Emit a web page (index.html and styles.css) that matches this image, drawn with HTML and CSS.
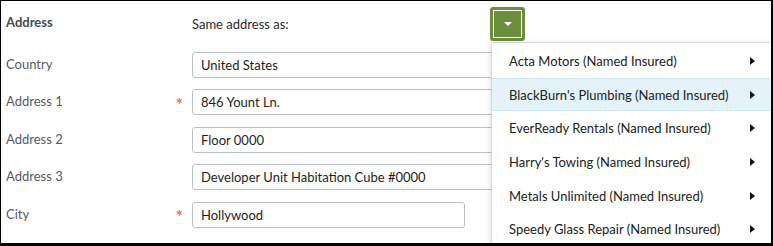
FILE: index.html
```html
<!DOCTYPE html>
<html>
<head>
<meta charset="utf-8">
<link rel="stylesheet" href="styles.css">
</head>
<body>
<div class="frame">
  <div class="form">
    <div class="section-title">Address</div>
    <div class="header-right">
      <span class="same-label">Same address as:</span>
      <button class="menu-btn" type="button"><span class="btn-inner"><span class="tri-down"></span></span></button>
    </div>

    <div class="label">Country</div>
    <div class="req"></div>
    <div class="field"><div class="input wide">United States</div></div>

    <div class="label">Address 1</div>
    <div class="req">*</div>
    <div class="field"><div class="input wide">846 Yount Ln.</div></div>

    <div class="label">Address 2</div>
    <div class="req"></div>
    <div class="field"><div class="input wide">Floor 0000</div></div>

    <div class="label">Address 3</div>
    <div class="req"></div>
    <div class="field"><div class="input wide">Developer Unit Habitation Cube #0000</div></div>

    <div class="label">City</div>
    <div class="req">*</div>
    <div class="field"><div class="input narrow">Hollywood</div></div>
  </div>

  <div class="menu">
    <div class="item">Acta Motors (Named Insured)<span class="tri-right"></span></div>
    <div class="item active">BlackBurn's Plumbing (Named Insured)<span class="tri-right"></span></div>
    <div class="item">EverReady Rentals (Named Insured)<span class="tri-right"></span></div>
    <div class="item">Harry's Towing (Named Insured)<span class="tri-right"></span></div>
    <div class="item">Metals Unlimited (Named Insured)<span class="tri-right"></span></div>
    <div class="item">Speedy Glass Repair (Named Insured)<span class="tri-right"></span></div>
  </div>
</div>
</body>
</html>
```

FILE: styles.css
```css
html, body {
  margin: 0;
  padding: 0;
  background: #ffffff;
}

body {
  font-family: "Lato", "Liberation Sans", sans-serif;
  font-size: 13px;
  color: #222222;
}

.frame {
  position: relative;
  width: 773px;
  height: 246px;
  box-sizing: border-box;
  border-top: 1px solid #000;
  border-left: 1px solid #000;
  border-right: 2px solid #000;
  border-bottom: 3px solid #000;
  overflow: hidden;
  background: #fff;
}

.form {
  display: grid;
  grid-template-columns: 165px 21px 1fr;
  grid-template-rows: 33px repeat(5, 26px);
  row-gap: 11.5px;
  padding: 6px 0 0 5px;
  align-items: center;
}

.section-title {
  font-weight: 700;
  color: #444a52;
  align-self: start;
  padding-top: 7px;
}

.header-right {
  grid-column: 2 / 4;
  display: flex;
  align-items: center;
  padding-left: 21px;
}

.same-label {
  width: 298px;
  color: #2a2a2a;
  padding-top: 1px;
}

.menu-btn {
  width: 35px;
  height: 34px;
  margin: 0;
  padding: 3px;
  border: none;
  border-radius: 3px;
  background: #6a8e3b;
  display: flex;
  box-sizing: border-box;
}

.btn-inner {
  flex: 1;
  border: 1px solid #ffffff;
  display: flex;
  align-items: center;
  justify-content: center;
}

.tri-down {
  width: 0;
  height: 0;
  border-left: 4px solid transparent;
  border-right: 4px solid transparent;
  border-top: 4px solid #ffffff;
}

.label {
  color: #555b63;
  padding-bottom: 2px;
}

.req {
  color: #e0706a;
  font-size: 17px;
  font-weight: 700;
  text-align: right;
  padding-right: 9px;
  padding-top: 4px;
}

.field {
  display: flex;
}

.input {
  box-sizing: border-box;
  height: 26px;
  border: 1px solid #b9bfc7;
  border-radius: 3px;
  padding: 0 8px;
  display: flex;
  align-items: center;
  color: #1e1e1e;
}

.wide {
  width: 380px;
}

.narrow {
  width: 273px;
}

.menu {
  position: absolute;
  left: 490px;
  top: 41px;
  width: 279px;
  background: #ffffff;
  border: 1px solid #d4d7db;
  border-radius: 3px 3px 0 0;
  box-shadow: 0 2px 6px rgba(0, 0, 0, 0.15);
  padding-top: 1px;
}

.item {
  height: 33.6px;
  flex-shrink: 0;
  box-sizing: border-box;
  display: flex;
  align-items: center;
  justify-content: space-between;
  padding: 1px 16px 0 17px;
  color: #222;
  border-top: 1px solid transparent;
  border-bottom: 1px solid transparent;
}

.item.active {
  background: #e4f2fa;
  border-top-color: #cfe5f2;
  border-bottom-color: #cfe5f2;
}

.tri-right {
  width: 0;
  height: 0;
  border-top: 4px solid transparent;
  border-bottom: 4px solid transparent;
  border-left: 5px solid #111;
}
```
